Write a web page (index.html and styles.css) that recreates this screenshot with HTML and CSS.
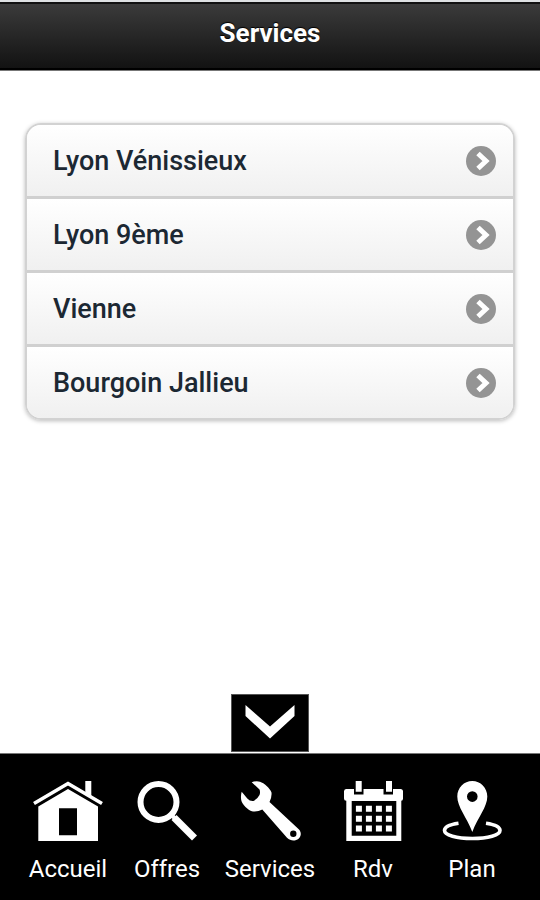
FILE: index.html
```html
<!DOCTYPE html>
<html lang="fr">
<head>
<meta charset="utf-8">
<meta name="viewport" content="width=device-width, initial-scale=1">
<title>Services</title>
<link rel="stylesheet" href="styles.css">
</head>
<body>
<header class="header"><h1 class="title">Services</h1></header>
<main class="main">
  <ul class="list">
    <li class="row"><a class="link" href="#venissieux">Lyon Vénissieux
      <svg class="arrow" viewBox="0 0 30 30" aria-hidden="true"><circle cx="15" cy="15" r="15"/><path d="M12 7.500l8 7.500-8 7.500"/></svg></a></li>
    <li class="row"><a class="link" href="#lyon9">Lyon 9ème
      <svg class="arrow" viewBox="0 0 30 30" aria-hidden="true"><circle cx="15" cy="15" r="15"/><path d="M12 7.500l8 7.500-8 7.500"/></svg></a></li>
    <li class="row"><a class="link" href="#vienne">Vienne
      <svg class="arrow" viewBox="0 0 30 30" aria-hidden="true"><circle cx="15" cy="15" r="15"/><path d="M12 7.500l8 7.500-8 7.500"/></svg></a></li>
    <li class="row"><a class="link" href="#bourgoin">Bourgoin Jallieu
      <svg class="arrow" viewBox="0 0 30 30" aria-hidden="true"><circle cx="15" cy="15" r="15"/><path d="M12 7.500l8 7.500-8 7.500"/></svg></a></li>
  </ul>
  <button class="toggle" type="button" aria-label="Masquer le menu">
    <svg class="chevron" viewBox="0 0 50 34" aria-hidden="true"><path d="M0.500 0L25 21.500 49.500 0V11L25 33.500 0.500 11z"/></svg>
  </button>
</main>
<nav class="nav">
  <a class="tab" href="#accueil">
    <svg class="icon icon-wide" viewBox="0 0 70 60" aria-hidden="true">
      <path d="M52.300 0h6v16l-6-4z"/>
      <path class="line" d="M1 22.500L35 2.500l34 20" stroke-width="3.600"/>
      <path fill-rule="evenodd" d="M35 8L65 25.500V60H5.300V25.500zM26 27.300v27h18v-27z"/>
    </svg>Accueil</a>
  <a class="tab" href="#offres">
    <svg class="icon" viewBox="0 0 60 60" aria-hidden="true">
      <circle class="line" cx="21.500" cy="21" r="18" stroke-width="6"/>
      <path class="line" d="M34 33.500l4 4" stroke-width="4"/>
      <path class="line" d="M37 36.500l20.500 20.500" stroke-width="7"/>
    </svg>Offres</a>
  <a class="tab" href="#services">
    <svg class="icon" viewBox="0 0 60 60" aria-hidden="true">
      <path fill-rule="evenodd" d="M11.700 1.200Q16-.3 20 .7C24 2 30 7 31.500 11.500Q32 16 29.500 21L59 48.500C65 55.500 54.500 64 47 56.800L22.300 28.500Q18 31 13 30.500C8 29.500 2 23.500 1.200 19Q.5 14.500 1.700 10.700L7.300 17.500Q10 20.500 13.500 20Q17.500 18 19.500 14Q20.500 11 19.500 8.500zM53.300 49.500a3.200 3.200 0 1 0 0 6.400 3.200 3.200 0 0 0 0-6.400z"/>
    </svg>Services</a>
  <a class="tab" href="#rdv">
    <svg class="icon" viewBox="0 0 60 60" aria-hidden="true">
      <path fill-rule="evenodd" d="M3 8H11v5.500h9.500V8h20v5.500H50V8h7.500Q60 8 60 10.500V17.500Q60 19.700 58.300 19.700V60H3.300V19.700Q1 19.700 1 17.500V10.500Q1 8 3 8zM8.700 20v34.700h44.600V20z"/>
      <path d="M12.700 0h6v10.700h-6zM43 0h6v10.700h-6z"/>
      <path class="dots" d="M12.900 27.700h36M12.900 37.700h36M12.900 47.500h36"/>
    </svg>Rdv</a>
  <a class="tab" href="#plan">
    <svg class="icon" viewBox="0 0 60 60" aria-hidden="true">
      <path fill-rule="evenodd" d="M30.300 0C38.500 0 45.300 6.800 45.300 15.500 45.300 26 36 36 30.300 51 24.600 36 15.300 26 15.300 15.500 15.300 6.800 22 0 30.300 0zM30.300 10.300a5.300 5.300 0 1 0 0 10.600 5.300 5.300 0 0 0 0-10.600z"/>
      <path class="line" d="M16.500 42.300C8 43.500 2.500 46 2.500 49.500 2.500 54 14.500 57.500 30.300 57.500S58 54 58 49.500C58 46 52.500 43.500 44 42.300" stroke-width="3.600"/>
    </svg>Plan</a>
</nav>
</body>
</html>
```
FILE: styles.css
```css
* {
  box-sizing: border-box;
}

body {
  margin: 0;
  min-height: 100vh;
  display: flex;
  flex-direction: column;
  background: #fff;
  font-family: Roboto, "Liberation Sans", sans-serif;
}

.header {
  border-top: 2px solid #dde0e2;
  border-bottom: 1px solid #777;
  padding: 15px 15px 21px;
  background: linear-gradient(#3c3c3c, #111);
  box-shadow: inset 0 2px #111, inset 0 -2px #000;
}

.title {
  margin: 0;
  font-size: 26px;
  line-height: 32px;
  font-weight: 700;
  text-align: center;
  color: #fff;
  text-shadow: 0 -1px 1px #000;
}

.main {
  flex: 1;
  display: flex;
  flex-direction: column;
  align-items: center;
  padding: 52px 25px 1px;
}

.list {
  align-self: stretch;
  margin: 0;
  padding: 0;
  list-style: none;
  border: 2px solid #d2d2d2;
  border-radius: 16px;
  overflow: hidden;
  box-shadow: 0 1px 4px #0004;
}

.row + .row {
  border-top: 3px solid #d0d0d0;
}

.link {
  display: flex;
  align-items: center;
  justify-content: space-between;
  padding: 20px 17px 19px 26px;
  background: linear-gradient(#fff, #f0f0f0);
  font-size: 27px;
  line-height: 32px;
  font-weight: 500;
  color: #1c2833;
  text-decoration: none;
}

.arrow {
  width: 30px;
  height: 30px;
  fill: #949494;
}

.arrow path {
  fill: none;
  stroke: #fff;
  stroke-width: 5;
}

.toggle {
  margin-top: auto;
  width: 78px;
  height: 58px;
  padding: 0 0 2px;
  border: 1px solid #555;
  background: #000;
}

.chevron {
  display: block;
  width: 50px;
  height: 34px;
  margin: 0 auto;
  fill: #fff;
}

.nav {
  display: grid;
  grid-template-columns: 96fr 102fr 104fr 102fr 96fr;
  padding: 27px 20px 15px;
  border-top: 1px solid #777;
  background: #000;
}

.tab {
  display: flex;
  flex-direction: column;
  align-items: center;
  gap: 12px;
  font-size: 24px;
  line-height: 32px;
  color: #fff;
  text-decoration: none;
}

.icon {
  width: 60px;
  height: 60px;
  fill: #fff;
  overflow: visible;
}

.icon-wide {
  width: 70px;
}

.line {
  fill: none;
  stroke: #fff;
}

.dots {
  stroke: #fff;
  stroke-width: 6;
  stroke-dasharray: 6 4;
}
```
